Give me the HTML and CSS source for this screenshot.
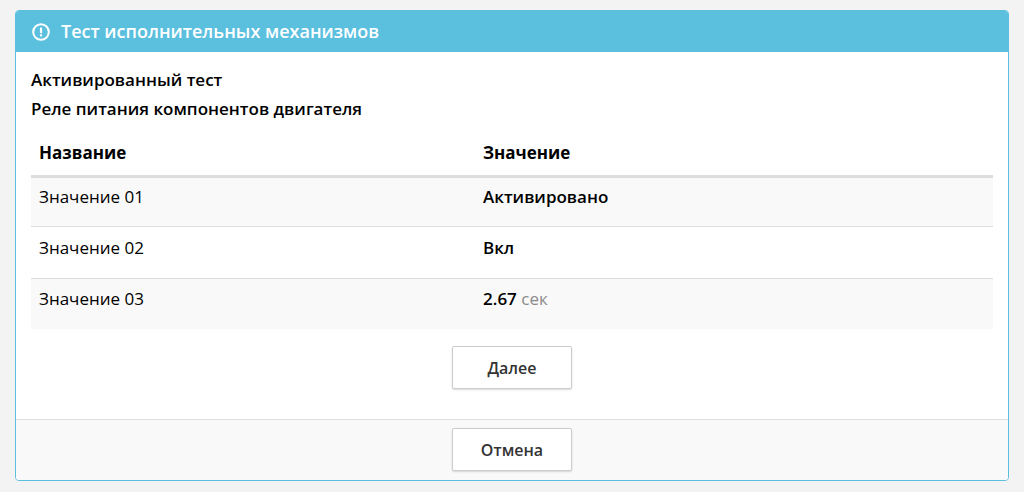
FILE: index.html
```html
<!DOCTYPE html>
<html lang="ru">
<head>
  <meta charset="UTF-8">
  <meta name="viewport" content="width=device-width, initial-scale=1.0">
  <title>Тест исполнительных механизмов</title>
  <link rel="stylesheet" href="styles.css">
</head>
<body>
  <div class="panel">
    <div class="panel-heading">
      <svg class="heading-icon" width="18" height="18" viewBox="0 0 18 18">
        <circle cx="9" cy="9" r="7.8" fill="none" stroke="#fff" stroke-width="2"/>
        <rect x="7.9" y="4.4" width="2.2" height="5.8" rx="0.6" fill="#fff"/>
        <rect x="7.9" y="11.2" width="2.2" height="2.2" rx="0.6" fill="#fff"/>
      </svg>
      <span class="heading-title">Тест исполнительных механизмов</span>
    </div>
    <div class="panel-body">
      <p class="label">Активированный тест</p>
      <p class="label">Реле питания компонентов двигателя</p>
      <table class="values">
        <thead>
          <tr>
            <th class="col-name">Название</th>
            <th>Значение</th>
          </tr>
        </thead>
        <tbody>
          <tr>
            <td>Значение 01</td>
            <td><strong>Активировано</strong></td>
          </tr>
          <tr>
            <td>Значение 02</td>
            <td><strong>Вкл</strong></td>
          </tr>
          <tr>
            <td>Значение 03</td>
            <td><strong>2.67</strong> <span class="unit">сек</span></td>
          </tr>
        </tbody>
      </table>
      <div class="actions">
        <button class="btn">Далее</button>
      </div>
    </div>
    <div class="panel-footer">
      <button class="btn">Отмена</button>
    </div>
  </div>
</body>
</html>
```

FILE: styles.css
```css
body {
  margin: 0;
  padding: 10px 15px 11px;
  background-color: #f3f3f3;
  font-family: "Open Sans", sans-serif;
  font-size: 17px;
  color: #000;
}

.panel {
  background-color: #fff;
  border: 1px solid #5bc0de;
  border-radius: 4px;
  overflow: hidden;
}

.panel-heading {
  display: flex;
  align-items: center;
  gap: 11px;
  height: 41px;
  padding-left: 16px;
  background-color: #5bc0de;
  color: #fff;
  font-size: 18px;
  font-weight: 600;
}

.heading-title {
  padding-bottom: 2px;
}

.panel-body {
  padding: 17px 15px 30px;
}

.label {
  margin: 0 0 7px;
  height: 22px;
  line-height: 22px;
  font-weight: 600;
}

.values {
  width: 100%;
  margin-top: 12px;
  border-collapse: collapse;
  table-layout: fixed;
}

.values th {
  box-sizing: border-box;
  height: 44px;
  padding: 0 8px 2px;
  text-align: left;
  font-weight: 700;
  border-bottom: 3px solid #ddd;
}

.col-name {
  width: 444px;
}

.values td {
  box-sizing: border-box;
  height: 51px;
  padding: 0 8px 10px;
  border-top: 1px solid #ddd;
}

.values tbody tr:first-child td {
  height: 50px;
  border-top: none;
}

.values tbody tr:nth-child(2) td {
  height: 52px;
}

.values tbody tr:nth-child(odd) {
  background-color: #f9f9f9;
}

.values strong {
  font-weight: 600;
}

.unit {
  color: #8a8a8a;
}

.actions {
  display: flex;
  justify-content: center;
  margin-top: 17px;
}

.btn {
  width: 120px;
  height: 43px;
  padding: 0;
  background-color: #fff;
  border: 1px solid #ccc;
  border-radius: 2px;
  box-shadow: 0 1px 2px rgba(0, 0, 0, 0.15);
  color: #333;
  font-family: "Open Sans", sans-serif;
  font-size: 16px;
  font-weight: 600;
}

.panel-footer {
  display: flex;
  justify-content: center;
  padding: 8px 0 9px;
  background-color: #f9f9f9;
  border-top: 1px solid #ddd;
}
```
